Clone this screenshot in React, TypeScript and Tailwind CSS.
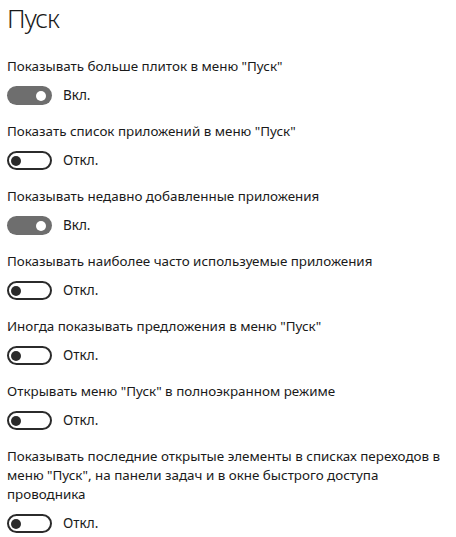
const items = [
  { label: 'Показывать больше плиток в меню "Пуск"', on: true },
  { label: 'Показать список приложений в меню "Пуск"', on: false },
  { label: "Показывать недавно добавленные приложения", on: true },
  { label: "Показывать наиболее часто используемые приложения", on: false },
  { label: 'Иногда показывать предложения в меню "Пуск"', on: false },
  { label: 'Открывать меню "Пуск" в полноэкранном режиме', on: false },
  {
    label:
      'Показывать последние открытые элементы в списках переходов в меню "Пуск", на панели задач и в окне быстрого доступа проводника',
    on: false,
  },
];

function Toggle({ on }: { on: boolean }) {
  return (
    <div className="flex items-center gap-[11px]">
      {on ? (
        <div className="flex h-[19px] w-[45px] items-center justify-end rounded-full bg-[#6e6e6e] pr-[6px]">
          <div className="h-[10px] w-[10px] rounded-full bg-white" />
        </div>
      ) : (
        <div className="flex h-[19px] w-[45px] items-center rounded-full border-2 border-[#2b2b2b] pl-[2px]">
          <div className="h-[10px] w-[10px] rounded-full bg-[#2b2b2b]" />
        </div>
      )}
      <span className="text-[13.5px] leading-[19px]">{on ? "Вкл." : "Откл."}</span>
    </div>
  );
}

export default function App() {
  return (
    <div className="min-h-screen bg-white px-[7px] text-[#1a1a1a] font-['Noto_Sans','Open_Sans',sans-serif]">
      <h1 className="text-[26px] font-light leading-[36px] tracking-[-1px]">Пуск</h1>
      <div className="mt-[21px] flex w-[440px] flex-col gap-[17px]">
        {items.map((it, i) => (
          <div key={i} className="flex flex-col gap-[10px]">
            <div className="text-[13.4px] leading-[19px]">{it.label}</div>
            <Toggle on={it.on} />
          </div>
        ))}
      </div>
    </div>
  );
}
